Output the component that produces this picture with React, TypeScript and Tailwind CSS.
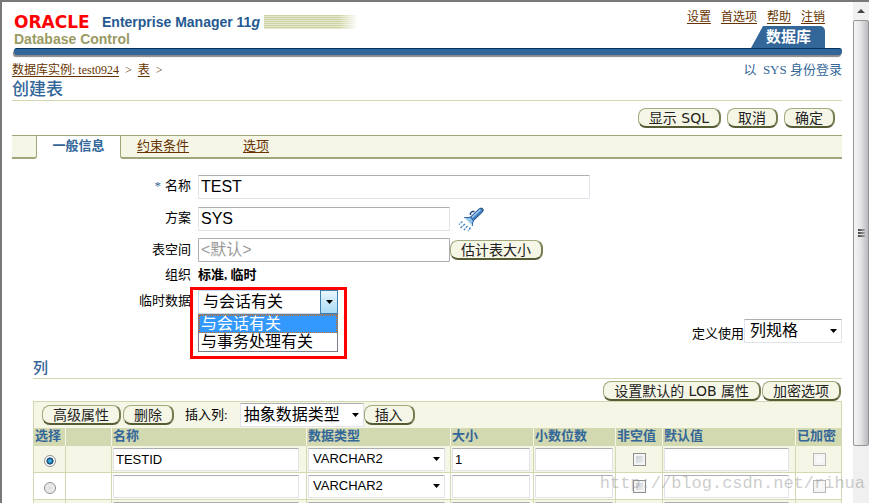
import React from 'react';
import clsx from 'clsx';

type Row = {
  id: number;
  name: string;
  size: string;
  selected: boolean;
};

const rows: Row[] = [
  { id: 1, name: 'TESTID', size: '1', selected: true },
  { id: 2, name: '', size: '', selected: false },
  { id: 3, name: '', size: '', selected: false },
];

const topLinks = ['设置', '首选项', '帮助', '注销'];

const columns = [
  { label: '选择', width: 'w-[32px]' },
  { label: '', width: 'w-[46px]' },
  { label: '名称', width: '' },
  { label: '数据类型', width: 'w-[144px]' },
  { label: '大小', width: 'w-[83px]' },
  { label: '小数位数', width: 'w-[82px]' },
  { label: '非空值', width: 'w-[47px]' },
  { label: '默认值', width: 'w-[133px]' },
  { label: '已加密', width: 'w-[46px]' },
];

const fieldBorder =
  'block rounded-[1px] border border-[#e2e3ea] border-t-[#abadb3] bg-white text-black outline-none';

const OraButton = ({ children }: { children: React.ReactNode }) => (
  <button
    type="button"
    className="h-5 shrink-0 whitespace-nowrap rounded-[8px] border border-r-2 border-b-2 border-[#a3aa80] border-r-[#767c50] border-b-[#555b33] bg-[#f5f6e6] px-[10px] font-['DejaVu_Sans','Noto_Sans_CJK_SC',sans-serif] text-[14px] leading-[16px] text-[#222]"
  >
    {children}
  </button>
);

const Arrow = ({ className }: { className?: string }) => (
  <svg
    viewBox="0 0 7 4"
    className={clsx('pointer-events-none absolute top-1/2 h-[4px] w-[7px] -translate-y-1/2', className)}
  >
    <path d="M0 0h7L3.5 4z" fill="#000" />
  </svg>
);

const Flashlight = () => (
  <svg viewBox="0 0 26 25" className="h-[25px] w-[26px]">
    <path d="M12 10.500 21.500 1.500q2-1 3.500.5.500 1.500-.5 3L15 14z" fill="#3d7fc1" stroke="#1b477f" />
    <path d="M14 10.500 22.500 2.500" stroke="#a5cff0" strokeWidth="1.500" />
    <path d="M12.500 8V6l2-1.500h2" stroke="#1b477f" strokeWidth="1.500" fill="none" />
    <path d="M6.500 10.500q4 .5 6-.5l3 4q-1.500 1.500-1 5z" fill="#8fc0e8" stroke="#2a609c" />
    <path d="M7 11.500l7 7" stroke="#e4f3fd" strokeWidth="1.500" />
    <path
      d="M4.500 14.500 1 17.500M7 17l-4.500 4M9.500 19l-3.500 4M12.500 20.500l-2.500 3.500"
      stroke="#4583bd"
      strokeWidth="1.300"
      strokeDasharray="2.500 1"
    />
  </svg>
);

const Header = () => (
  <header>
    <div className="flex h-[46px] justify-between">
      <div className="pt-[12px] pl-[2px] font-['Liberation_Sans',sans-serif] font-bold">
        <div className="flex h-[16px] items-center">
          <span className="w-[88px] font-['DejaVu_Sans',sans-serif] text-[17px] leading-[16px] text-[#f00]">
            ORACLE
          </span>
          <span className="text-[14px] leading-[16px] text-[#255a91]">
            Enterprise Manager 11<i>g</i>
          </span>
          <span className="ml-[4px] h-[14px] w-[94px] bg-[repeating-linear-gradient(to_bottom,#cfd3a4_0px,#cfd3a4_1px,#e6e8cd_1px,#e6e8cd_2px)] [mask-image:linear-gradient(to_right,black_80%,transparent)]" />
        </div>
        <div className="text-[14px] leading-[18px] text-[#999a62]">Database Control</div>
      </div>
      <div className="flex flex-col items-end justify-between pt-[7px] pr-[17px]">
        <nav className="flex gap-[10px] text-[12px] leading-[16px]">
          {topLinks.map((label) => (
            <a key={label} href="#" className="text-[#663300] underline underline-offset-2">
              {label}
            </a>
          ))}
        </nav>
        <a
          href="#"
          className="h-[22px] w-[74px] rounded-tr-[5px] bg-[#336699] pr-[14px] text-right text-[15px] leading-[23px] font-bold text-white [clip-path:polygon(12px_0,100%_0,100%_100%,0_100%)]"
        >
          数据库
        </a>
      </div>
    </div>
    <div className="ml-[2px] h-[7px] rounded-[3px] border-t border-[#003366] bg-[#336699] shadow-[-1px_2px_1px_#888]" />
  </header>
);

const Tabs = () => (
  <nav className="mt-[7px] flex h-6 border-t border-[#9fa77a] text-[13px] leading-[20px]">
    <span className="w-[25px] rounded-br-[3px] border-r border-b-2 border-[#9fa77a] bg-[#f5f6e6]" />
    <a href="#" className="w-[83px] text-center font-bold text-[#336699]">
      一般信息
    </a>
    <div className="flex flex-1 gap-[54px] rounded-bl-[3px] border-b-2 border-l border-[#9fa77a] bg-[#f5f6e6] pl-[16px] text-[#663300]">
      <a href="#" className="underline underline-offset-2">
        约束条件
      </a>
      <a href="#" className="underline underline-offset-2">
        选项
      </a>
    </div>
  </nav>
);

const Label = ({ htmlFor, children }: { htmlFor?: string; children: React.ReactNode }) => (
  <label htmlFor={htmlFor} className="w-[186px] shrink-0 pr-[7px] text-right text-[13px] leading-[22px]">
    {children}
  </label>
);

const textField = "h-6 px-[2px] font-['Liberation_Sans','Noto_Sans_CJK_SC',sans-serif] text-[16px]";

const TableForm = () => (
  <form className="pt-4">
    <div className="mb-2 flex">
      <Label htmlFor="name">
        <span className="mr-[4px] text-[#336699]">*</span>名称
      </Label>
      <input id="name" defaultValue="TEST" className={clsx(fieldBorder, textField, 'w-[392px]')} />
    </div>
    <div className="mb-[7px] flex">
      <Label htmlFor="schema">方案</Label>
      <input id="schema" defaultValue="SYS" className={clsx(fieldBorder, textField, 'w-[252px]')} />
      <button type="button" aria-label="选择方案" className="ml-2 h-6">
        <Flashlight />
      </button>
    </div>
    <div className="flex items-center">
      <Label htmlFor="tablespace">表空间</Label>
      <input
        id="tablespace"
        placeholder="<默认>"
        className={clsx(
          textField,
          'block w-[252px] rounded-[1px] border border-[#abadb3] bg-white outline-none placeholder:text-[#9a9a9a]',
        )}
      />
      <OraButton>估计表大小</OraButton>
    </div>
    <div className="mb-[2px] flex h-[26px] items-center">
      <Label>组织</Label>
      <b className="text-[13px]">标准, 临时</b>
    </div>
    <div className="flex">
      <Label htmlFor="temp">临时数据</Label>
      <div className="relative w-[140px]">
        <select
          id="temp"
          className="block h-[24px] w-full appearance-none border border-[#c5daed] bg-white pl-[4px] text-[16px] leading-[22px] outline-none"
        >
          <option>与会话有关</option>
          <option>与事务处理有关</option>
        </select>
        <span className="pointer-events-none absolute top-0 right-0 h-[24px] w-[18px] border border-[#3c7fb1] bg-linear-to-b from-[#eaf6fd] to-[#a9dbf5]" />
        <Arrow className="right-[5px]" />
        <ul
          role="listbox"
          className="absolute top-[24px] left-0 z-10 w-full border border-[#7a7f88] bg-white text-[16px] leading-[18px]"
        >
          <li
            role="option"
            aria-selected="true"
            className="bg-[#3399ff] pl-[2px] text-white outline-1 -outline-offset-1 outline-dotted outline-[#c96a1c]"
          >
            与会话有关
          </li>
          <li role="option" aria-selected="false" className="pl-[2px]">
            与事务处理有关
          </li>
        </ul>
        <div className="pointer-events-none absolute -top-[3px] -left-[8px] z-20 h-[72px] w-[157px] border-3 border-[#f00]" />
      </div>
    </div>
    <div className="mt-[5px] flex items-center justify-end">
      <label htmlFor="define" className="pt-[6px] text-[13px] leading-[18px]">
        定义使用
      </label>
      <div className="relative w-[98px]">
        <select id="define" className={clsx(fieldBorder, 'h-6 w-full appearance-none pl-[5px] text-[16px] leading-[22px]')}>
          <option>列规格</option>
        </select>
        <Arrow className="right-[5px]" />
      </div>
    </div>
  </form>
);

const Cell = ({ className, children }: { className?: string; children?: React.ReactNode }) => (
  <td className={clsx('h-[27px] border-r border-b border-[#d2d8b0] p-0 pl-px', className)}>{children}</td>
);

const cellField = "h-[23px] w-full font-['Liberation_Sans',sans-serif] text-[13px]";
const checkBox =
  'mx-auto block size-[13px] appearance-none border border-[#8e8f8f] bg-linear-to-br from-[#c3c9d2] to-[#f6f6f6] shadow-[inset_0_0_0_2px_#f4f4f4] disabled:border-[#b8b8b8] disabled:bg-none disabled:bg-[#f8f8f8]';

const ColumnTable = () => (
  <section className="ml-[21px] pt-[15px]">
    <h2 className="border-b border-[#d2d8b0] text-[15px] leading-[20px] font-medium text-[#336699]">列</h2>
    <div className="flex justify-end gap-px pt-[2px] pr-px">
      <OraButton>设置默认的 LOB 属性</OraButton>
      <OraButton>加密选项</OraButton>
    </div>
    <div className="flex h-[27px] items-center border border-b-0 border-[#d2d8b0] bg-[#f5f6e6] pl-[8px]">
      <OraButton>高级属性</OraButton>
      <span className="w-[2px]" />
      <OraButton>删除</OraButton>
      <label htmlFor="insert" className="mr-[12px] ml-[11px] text-[13px]">
        插入列:
      </label>
      <div className="relative w-[124px]">
        <select id="insert" className={clsx(fieldBorder, 'h-6 w-full appearance-none pl-[3px] text-[16px] leading-[22px]')}>
          <option>抽象数据类型</option>
        </select>
        <Arrow className="right-[5px]" />
      </div>
      <OraButton>插入</OraButton>
    </div>
    <table className="w-full table-fixed border-separate border-spacing-0 border-l border-[#d2d8b0]">
      <thead>
        <tr className="bg-[#d2d8b0] text-[13px] leading-[16px] text-[#336699]">
          {columns.map((column, i) => (
            <th
              key={i}
              className={clsx(
                'h-[18px] border-r border-[#f5f6e6] p-0 pl-px text-left align-top font-bold whitespace-nowrap last:border-[#d2d8b0]',
                column.width,
                (column.label === '非空值' || column.label === '已加密') && 'pl-[3px]',
              )}
            >
              {column.label}
            </th>
          ))}
        </tr>
      </thead>
      <tbody>
        {rows.map((row) => (
          <tr key={row.id} className="odd:bg-[#f5f6e6]">
            <Cell>
              <input
                type="radio"
                name="row"
                aria-label={`选择 ${row.id}`}
                defaultChecked={row.selected}
                className="mx-auto mt-[3px] block size-[12px] appearance-none rounded-full border border-[#8e8f8f] bg-radial from-[#dcdcdc] to-[#f6f6f6] checked:from-[#3bb4e8] checked:from-15% checked:via-[#10385f] checked:via-45% checked:to-white checked:to-55%"
              />
            </Cell>
            <Cell />
            <Cell className="pr-[7px]">
              <input aria-label="名称" defaultValue={row.name} className={clsx(fieldBorder, cellField, 'px-[2px]')} />
            </Cell>
            <Cell className="pr-[5px]">
              <div className="relative">
                <select aria-label="数据类型" className={clsx(fieldBorder, cellField, 'appearance-none pl-[4px]')}>
                  <option>VARCHAR2</option>
                </select>
                <Arrow className="right-[5px]" />
              </div>
            </Cell>
            <Cell className="pr-[3px]">
              <input aria-label="大小" defaultValue={row.size} className={clsx(fieldBorder, cellField, 'px-[2px]')} />
            </Cell>
            <Cell className="pr-[2px]">
              <input aria-label="小数位数" className={clsx(fieldBorder, cellField, 'px-[2px]')} />
            </Cell>
            <Cell>
              <input type="checkbox" aria-label="非空值" className={checkBox} />
            </Cell>
            <Cell className="pr-[6px]">
              <input aria-label="默认值" className={clsx(fieldBorder, cellField, 'px-[2px]')} />
            </Cell>
            <Cell>
              <input type="checkbox" aria-label="已加密" disabled className={checkBox} />
            </Cell>
          </tr>
        ))}
      </tbody>
    </table>
  </section>
);

const ScrollBar = () => (
  <div className="flex w-[16px] shrink-0 flex-col bg-[#f0f0f0]">
    <svg viewBox="0 0 16 18" className="h-[18px] w-[16px] shrink-0">
      <path d="M4 11h8L8 7z" fill="#444" />
    </svg>
    <div className="flex h-[85%] flex-col items-center justify-center gap-px rounded-[2px] border border-[#959595] bg-linear-to-r from-[#f5f5f5] via-[#e3e3e6] to-[#b9b9be]">
      <span className="h-[2px] w-[7px] bg-linear-to-r from-[#444] to-[#aaa]" />
      <span className="h-[2px] w-[7px] bg-linear-to-r from-[#444] to-[#aaa]" />
      <span className="h-[2px] w-[7px] bg-linear-to-r from-[#444] to-[#aaa]" />
    </div>
  </div>
);

export default function App() {
  return (
    <div className="relative h-screen overflow-hidden bg-white pr-[2px] font-['Liberation_Serif','Noto_Sans_CJK_SC',serif] text-black">
      <div className="flex h-full border-t-2 border-l-2 border-[#787878]">
        <main className="min-w-0 flex-1 pr-[11px] pl-[10px]">
          <Header />
          <div className="flex h-[24px] items-end justify-between text-[#336699]">
            <div className="flex gap-[6px] text-[12px] leading-[17px]">
              <a href="#" className="text-[#663300] underline underline-offset-2">
                数据库实例: test0924
              </a>
              <span className="text-[#663300]">&gt;</span>
              <a href="#" className="text-[#663300] underline underline-offset-2">
                表
              </a>
              <span className="text-[#663300]">&gt;</span>
            </div>
            <span className="text-[13px] leading-[18px]">以&nbsp; SYS 身份登录</span>
          </div>
          <h1 className="h-[22px] border-b border-[#d2d8b0] text-[17px] leading-[22px] font-medium text-[#336699]">
            创建表
          </h1>
          <div className="flex justify-end gap-[6px] pt-[7px] pr-[7px]">
            <OraButton>显示 SQL</OraButton>
            <OraButton>取消</OraButton>
            <OraButton>确定</OraButton>
          </div>
          <Tabs />
          <TableForm />
          <ColumnTable />
        </main>
        <ScrollBar />
      </div>
      <span className="pointer-events-none absolute right-[6px] bottom-[8px] font-['Liberation_Mono',monospace] text-[17px] leading-[22px] text-[#999]/50">
        http://blog.csdn.net/rihua
      </span>
    </div>
  );
}
